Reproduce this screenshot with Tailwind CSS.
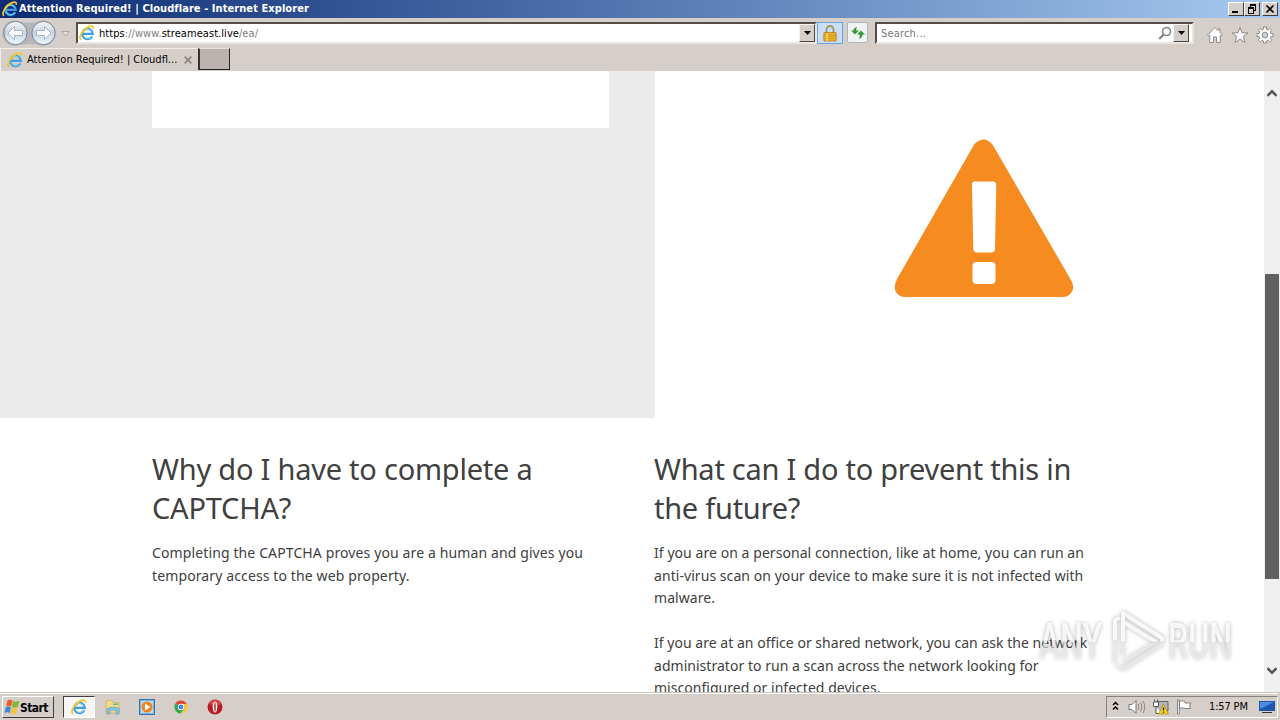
<!DOCTYPE html>
<html lang="en">
<head>
  <meta charset="UTF-8" />
  <title>Attention Required! | Cloudflare</title>
  <script src="https://cdn.jsdelivr.net/npm/@tailwindcss/browser@4"></script>
</head>
<body class="w-[1280px] h-[720px] overflow-hidden flex flex-col bg-white text-black font-['DejaVu_Sans_Condensed','DejaVu_Sans',sans-serif] text-[11px]">

  <!-- Shared icons -->
  <svg class="hidden">
    <symbol id="ie" viewBox="0 0 16 16">
      <path d="M13.200 11.200A5.200 5.200 0 1 1 13.700 8.900H4.200" fill="none" stroke="#3b9ee2" stroke-width="2.300" />
      <path d="M12.800 11.300A4.900 4.900 0 0 1 4 10M4.200 7A4.500 4.500 0 0 1 12.500 7" fill="none" stroke="#8ad6f7" stroke-width=".9" />
      <path d="M2.200 14.800C-1.500 13.500 3.500 4.500 9.500 1.900c3.400-1.500 5.300-.8 4.600 1.900" fill="none" stroke="#f2c62c" stroke-width="1.700" />
    </symbol>
  </svg>

  <!-- Title bar -->
  <header class="h-[18px] shrink-0 flex items-center bg-linear-to-r from-[#0d2a72] to-[#a6caf0] pl-0.5 pr-0.5">
    <svg class="size-4 mr-px"><use href="#ie" /></svg>
    <span class="text-white font-bold whitespace-nowrap tracking-[0.07px] pt-px">Attention Required! | Cloudflare - Internet Explorer</span>
    <div class="ml-auto flex">
      <div class="w-4 h-3.5 bg-[#d6cfc9] border border-t-white border-l-white border-b-[#404040] border-r-[#404040] flex items-end pl-[3px] pb-[2px]"><i class="w-1.5 h-0.5 bg-black"></i></div>
      <div class="w-4 h-3.5 bg-[#d6cfc9] border border-t-white border-l-white border-b-[#404040] border-r-[#404040]">
        <svg viewBox="0 0 14 12" class="w-3.5 h-3" shape-rendering="crispEdges"><path d="M5 2.500h6M5 1.500h6M10.500 2v5H9M5.500 2v2M3 4.500h6M3 5.500h6M8.500 5v5H3.500V5" fill="none" stroke="#000" /></svg>
      </div>
      <div class="w-4 h-3.5 ml-0.5 bg-[#d6cfc9] border border-t-white border-l-white border-b-[#404040] border-r-[#404040]">
        <svg viewBox="0 0 14 12" class="w-3.5 h-3"><path d="M3.500 2.500l7 7M10.500 2.500l-7 7" stroke="#000" stroke-width="1.600" /></svg>
      </div>
    </div>
  </header>

  <!-- Address bar -->
  <div class="h-[30px] shrink-0 flex items-start bg-[#d6cfc9]">
    <svg viewBox="0 0 76 30" class="w-[76px] h-[30px] shrink-0">
      <defs>
        <linearGradient id="orb" x1="0" y1="0" x2="0" y2="1">
          <stop offset="0" stop-color="#f4f7fa" />
          <stop offset=".5" stop-color="#c7d3e0" />
          <stop offset="1" stop-color="#eefaff" />
        </linearGradient>
      </defs>
      <path d="M15 2.500Q29 7 43 2.500A12.500 12.500 0 0 1 43 28Q29 24 15 28A12.500 12.500 0 0 1 15 2.500" fill="#b5b4b8" />
      <circle cx="15.500" cy="15" r="11.600" fill="url(#orb)" stroke="#778595" />
      <circle cx="43.500" cy="15" r="11.600" fill="url(#orb)" stroke="#778595" />
      <path d="M8 15l6.500-6.500v4h8v5h-8v4zM51 15L44.500 8.500v4h-8v5h8v4z" fill="#fff" stroke="#9aa7b5" stroke-width=".8" />
      <path d="M61.500 13.500h8l-4 4.500z" fill="#e4e0dd" stroke="#aaa5a1" />
    </svg>
    <div class="w-[741px] h-[22px] mt-1 bg-white border-2 border-t-[#554e48] border-l-[#554e48] border-b-[#e9e5e1] border-r-[#e9e5e1] flex items-center pl-px">
      <svg class="size-4"><use href="#ie" /></svg>
      <p class="ml-1 pt-0.5 whitespace-nowrap text-[#808080] tracking-[0.06px]"><span class="text-black">https</span>://www.<span class="text-black">streameast.live</span>/ea/</p>
      <div class="ml-auto w-4 h-[18px] bg-[#d6cfc9] border border-t-[#f4f1ee] border-l-[#f4f1ee] border-b-[#4a4a4a] border-r-[#4a4a4a] flex items-center justify-center">
        <svg viewBox="0 0 7 4" class="w-[7px] h-1"><path d="M0 0h7L3.500 4z" /></svg>
      </div>
    </div>
    <div class="w-[26px] h-[22px] mt-1 bg-[#c9def7] border border-[#6da3dc] flex items-center justify-center">
      <svg viewBox="0 0 14 17" class="w-3.5 h-[17px]">
        <path d="M3.500 8V4.500a3.500 3.500 0 0 1 7 0V8" fill="none" stroke="#a8905a" stroke-width="1.800" />
        <rect x=".8" y="7.500" width="12.400" height="8.500" rx=".6" fill="#f0b52b" stroke="#a97512" stroke-width=".7" />
        <path d="M1 9.700h12M1 11.700h12M1 13.700h12" stroke="#c08a20" stroke-width=".6" />
        <path d="M4 8v8" stroke="#ffe27f" />
      </svg>
    </div>
    <div class="w-[21px] h-[21px] ml-1 mt-1 rounded-xs bg-[#eff3f3] border border-[#adb6bd] flex items-center justify-center">
      <svg viewBox="0 0 16 14" class="w-4 h-3.5"><path d="M5 8.500L1 4.500h2.500Q3.500 1.500 7 1 6 2 6.300 4.500H9zM11 4.500l4 4h-2.500Q12.500 12 9 13 10 11.500 9.700 8.500H7z" fill="#33993b" /></svg>
    </div>
    <div class="w-[319px] h-[22px] ml-[7px] mt-1 bg-white border-2 border-t-[#554e48] border-l-[#554e48] border-b-[#e9e5e1] border-r-[#e9e5e1] flex items-center pl-1 pr-[3px]">
      <span class="text-[#777] tracking-[0.18px] pt-0.5">Search...</span>
      <svg viewBox="0 0 14 14" class="size-3.5 ml-auto"><circle cx="8.500" cy="5.500" r="4" fill="none" stroke="#858585" stroke-width="1.600" /><path d="M5.600 8.600L1.200 13" stroke="#858585" stroke-width="2.200" /></svg>
      <div class="ml-px w-4 h-[18px] bg-[#d6cfc9] border border-t-[#f4f1ee] border-l-[#f4f1ee] border-b-[#4a4a4a] border-r-[#4a4a4a] flex items-center justify-center">
        <svg viewBox="0 0 7 4" class="w-[7px] h-1"><path d="M0 0h7L3.500 4z" /></svg>
      </div>
    </div>
    <div class="flex gap-[7px] ml-3 mt-2">
      <svg viewBox="0 0 18 18" class="size-[18px]"><path d="M9 1.500L1.500 9l1.300 1.200 1-.9V16.500H7.500V11h3v5.500h3.700V9.300l1 .9L16.500 9 14 6.500V3h-2v1.500z" fill="#fff" stroke="#8d8a87" /></svg>
      <svg viewBox="0 0 18 18" class="size-[18px]"><path d="M9 1.200l2 5.700h6l-4.800 3.600 1.800 6L9 13l-5 3.500 1.800-6L1 6.900h6z" fill="#fff" stroke="#8d8a87" /></svg>
      <svg viewBox="0 0 18 18" class="size-[18px]">
        <path d="M7.500 1h3v2.200l1.600.7 1.600-1.600 2.100 2.100-1.600 1.600.7 1.600H17v3h-2.100l-.7 1.600 1.600 1.600-2.100 2.100-1.600-1.600-1.600.7V17h-3v-2l-1.600-.7-1.600 1.600-2.100-2.100 1.600-1.600-.7-1.600H1v-3h2.100l.7-1.600-1.600-1.600 2.100-2.100 1.600 1.600 1.600-.7z" fill="#fff" stroke="#8d8a87" />
        <circle cx="9" cy="9" r="2.800" fill="#d6cfc9" stroke="#8d8a87" />
      </svg>
    </div>
  </div>

  <!-- Tabs -->
  <div class="h-[23px] shrink-0 flex items-start bg-[#d6cfc9]">
    <div class="w-[198px] h-[23px] flex items-center pl-1.5 border-t border-l border-[#f3efec]">
      <svg class="size-4"><use href="#ie" /></svg>
      <span class="ml-1 pt-px whitespace-nowrap tracking-[0]">Attention Required! | Cloudfl...</span>
      <svg viewBox="0 0 8 8" class="size-2 ml-auto mr-1.5"><path d="M.7.700l6.600 6.600M7.300.700L.7 7.300" stroke="#8c8784" stroke-width="1.800" /></svg>
    </div>
    <div class="w-8 h-[22px] bg-[#bbb3af] border-l-2 border-r border-b border-t border-t-[#e4dfdb] border-l-[#333] border-r-[#222] border-b-[#222]"></div>
  </div>

  <!-- Page -->
  <div class="h-[621px] shrink-0 flex overflow-hidden">
    <main class="relative w-[1264px] h-[621px] overflow-hidden font-['Noto_Sans',sans-serif] text-[#404040]">
      <section class="h-[347px] flex">
        <div class="w-[655px] bg-[#ebebeb] pl-[152px]">
          <div class="w-[457px] h-[57px] bg-white"></div>
        </div>
        <svg viewBox="0 0 180 160" class="w-[180px] h-40 ml-[239px] mt-[67px]">
          <path d="M80.500 6Q90-3 98 6L100 9 177 142Q181.500 150 177 155 174 159 169 159H11Q5 159 2 154 -1 149 3 141L79 8.500z" fill="#f68b1f" />
          <path d="M81 43.500h17.500q3.800 0 3.800 4l-1.300 63q0 4-4 4H83.300q-4 0-4-4L78 47.500q-.5-4 3-4z" fill="#fff" />
          <rect x="78.500" y="124" width="23" height="22" rx="4" fill="#fff" />
        </svg>
      </section>
      <section class="flex pl-[152px] pt-[31px] whitespace-nowrap">
        <div class="w-[502px]">
          <h2 class="text-[29px] leading-[39px] tracking-[-0.23px]">Why do I have to complete a<br />CAPTCHA?</h2>
          <p class="mt-[15px] text-[14px] leading-[22.5px] tracking-[0.12px]">Completing the CAPTCHA proves you are a human and gives you<br />temporary access to the web property.</p>
        </div>
        <div>
          <h2 class="text-[29px] leading-[39px] tracking-[-0.26px]">What can I do to prevent this in<br />the future?</h2>
          <p class="mt-[15px] text-[14px] leading-[22.5px] tracking-[0.06px]">If you are on a personal connection, like at home, you can run an<br />anti-virus scan on your device to make sure it is not infected with<br />malware.</p>
          <p class="mt-[22.5px] text-[14px] leading-[22.5px] tracking-[0.03px]">If you are at an office or shared network, you can ask the network<br />administrator to run a scan across the network looking for<br />misconfigured or infected devices.</p>
        </div>
      </section>

      <!-- Watermark -->
      <svg viewBox="0 0 206 72" class="absolute left-[1032px] top-[534px] w-[206px] h-[72px] drop-shadow-[0_0_2px_rgba(0,0,0,0.35)]">
        <defs>
          <linearGradient id="wm" x1="0" y1="0" x2="0" y2="1">
            <stop offset=".5" stop-color="#fff" stop-opacity=".85" />
            <stop offset=".5" stop-color="#eee" stop-opacity=".6" />
          </linearGradient>
        </defs>
        <g fill="url(#wm)" font-family="Roboto, sans-serif" font-size="50" font-weight="500">
          <text x="7" y="54" textLength="63" lengthAdjust="spacingAndGlyphs">ANY</text>
          <text x="136" y="54" textLength="64" lengthAdjust="spacingAndGlyphs">RUN</text>
        </g>
        <g fill="none" stroke="url(#wm)" stroke-width="4" stroke-linejoin="round">
          <path d="M83 58V15l5-2" />
          <path d="M91 50V8l39 25v6L91 64l-6-3M91 17l33 20-33 20" />
        </g>
      </svg>
    </main>

    <!-- Scrollbar -->
    <aside class="w-4 bg-[#f0f0f0] flex flex-col items-center">
      <svg viewBox="0 0 10 8" class="w-2.5 h-2 mt-[18px]"><path d="M.5 6.800l4.500-4.500 4.500 4.500" fill="none" stroke="#555" stroke-width="2.400" /></svg>
      <div class="w-3.5 h-[305px] mt-[177px] bg-[#606060]"></div>
      <svg viewBox="0 0 10 8" class="w-2.5 h-2 mt-[88px]"><path d="M.5 1.200l4.500 4.500 4.500-4.500" fill="none" stroke="#555" stroke-width="2.400" /></svg>
    </aside>
  </div>

  <!-- Taskbar -->
  <footer class="h-7 shrink-0 flex items-start bg-[#d6cfc9] border-t border-[#c9c5b9] pr-0.5">
    <div class="w-full h-[27px] border-t border-white flex items-start pt-0.5">
      <div class="w-[52px] h-[22px] ml-0.5 border border-t-white border-l-white border-b-[#404040] border-r-[#404040] flex items-center pl-px">
        <svg viewBox="0 0 16 16" class="size-4">
          <path d="M3.500 1.500Q6 0 8.500 1.500L7.200 7.500Q4.500 6 2 7.500z" fill="#ee5a28" />
          <path d="M9 2Q12 3.500 15.500 1.500L14 7.500Q11 9.500 8 8z" fill="#7bb93b" />
          <path d="M1.800 8.200Q4.500 7 7 8.200L5.800 14Q3.500 12.500 .4 14z" fill="#3d87d8" />
          <path d="M7.800 8.700Q10.500 10.200 13.700 8.200L12.200 14Q9.500 16 6.500 14.500z" fill="#f8c23b" />
        </svg>
        <span class="font-bold text-[12px] tracking-[-0.6px] pt-px">Start</span>
      </div>
      <div class="w-8 h-[22px] ml-[9px] bg-[#f7f6f5] border border-t-[#404040] border-l-[#404040] border-b-white border-r-white flex items-center justify-center">
        <svg class="size-4"><use href="#ie" /></svg>
      </div>
      <div class="flex gap-[18px] ml-2.5 mt-[3px]">
        <svg viewBox="0 0 16 16" class="size-4"><path d="M2 1.500h5l1 2h6V14H1V4z" fill="#f5dc83" stroke="#c8ac54" stroke-width=".7" /><path d="M8 4.500h5v1.500H8z" fill="#67b58e" /><path d="M2 15V9.500Q8 6.500 14 9.500V15h-3v-4H5v4z" fill="#8acbea" stroke="#5296bd" stroke-width=".7" /></svg>
        <svg viewBox="0 0 16 16" class="size-4"><rect x=".5" y=".5" width="15" height="15" fill="#75b4e5" stroke="#3975ad" /><path d="M2 2h12v12H2z" fill="#b7dcf4" /><circle cx="8" cy="8" r="5.500" fill="#f18418" /><path d="M6 4.500l5.500 3.500L6 11.500z" fill="#fff" /></svg>
        <svg viewBox="0 0 16 16" class="size-4"><circle cx="8" cy="8" r="6.500" fill="#f6c630" /><path d="M8 8L2.400 4.600A6.500 6.500 0 0 1 13.700 5H8z" fill="#df4937" /><path d="M8 8L2.400 4.600A6.500 6.500 0 0 0 7.600 14.500L11 9.700z" fill="#36a45b" /><circle cx="8" cy="8" r="3.200" fill="#fff" /><circle cx="8" cy="8" r="2.400" fill="#4387ef" /></svg>
        <svg viewBox="0 0 16 16" class="size-4"><circle cx="8" cy="8" r="7.500" fill="#bd1b20" /><path d="M2 5a6.500 6.500 0 0 1 12 0Q8 8 2 5" fill="#d94848" /><ellipse cx="8" cy="8" rx="2.300" ry="5.500" fill="#fff" /><ellipse cx="8" cy="8" rx=".8" ry="4.800" fill="#a53535" /></svg>
      </div>
      <div class="ml-auto w-[172px] h-[22px] border border-t-[#86817c] border-l-[#86817c] border-b-white border-r-white flex items-center pl-[5px]">
        <svg viewBox="0 0 7 10" class="w-[7px] h-2.5 mb-0.5"><path d="M1 4l2.500-2.500L6 4M1 8.500L3.500 6 6 8.500" fill="none" stroke="#000" stroke-width="1.500" /></svg>
        <svg viewBox="0 0 18 16" class="w-[18px] h-4 ml-[9px]"><path d="M1 5.500h3l4-4v13l-4-4H1z" fill="#fff" stroke="#777" /><path d="M10 5q2 3 0 6M12.500 3.500q3 4.500 0 9M15 2q3.500 6 0 12" fill="none" stroke="#888" /></svg>
        <svg viewBox="0 0 18 16" class="w-[18px] h-4 ml-1.5"><path d="M5 2.500h11v9.500H5z" fill="#b5b5b5" stroke="#666" /><path d="M1.500 3h5v4.500h-5zM2.500 .5v2M5.500 .5v2M4 7.500v7h6" fill="#fff" stroke="#555" /><path d="M11.500 5.500L16.500 15h-10z" fill="#f8d51e" stroke="#a6840f" stroke-width=".7" /><path d="M11.500 8.500v3M11.500 12.500v1.300" stroke="#222" stroke-width="1.300" /></svg>
        <svg viewBox="0 0 17 16" class="w-[17px] h-4 ml-1.5"><path d="M1.500 1h1.800v14H1.500zM3.500 2.500q3-1.500 5.500 0v1.500h6l-1.500 3 1 2.500H9q-3-1.500-5.500 0z" fill="#fff" stroke="#777" stroke-width=".9" /></svg>
        <span class="ml-4 pt-px whitespace-nowrap tracking-[-0.15px]">1:57 PM</span>
        <svg viewBox="0 0 16 14" class="w-4 h-3.5 ml-auto mr-0.5"><path d="M0 1h16v10H0z" fill="#1d57ad" /><path d="M1 2h14L1 9z" fill="#4a8ddd" /><path d="M3 12.500h10" stroke="#333" /></svg>
      </div>
    </div>
  </footer>

</body>
</html>
